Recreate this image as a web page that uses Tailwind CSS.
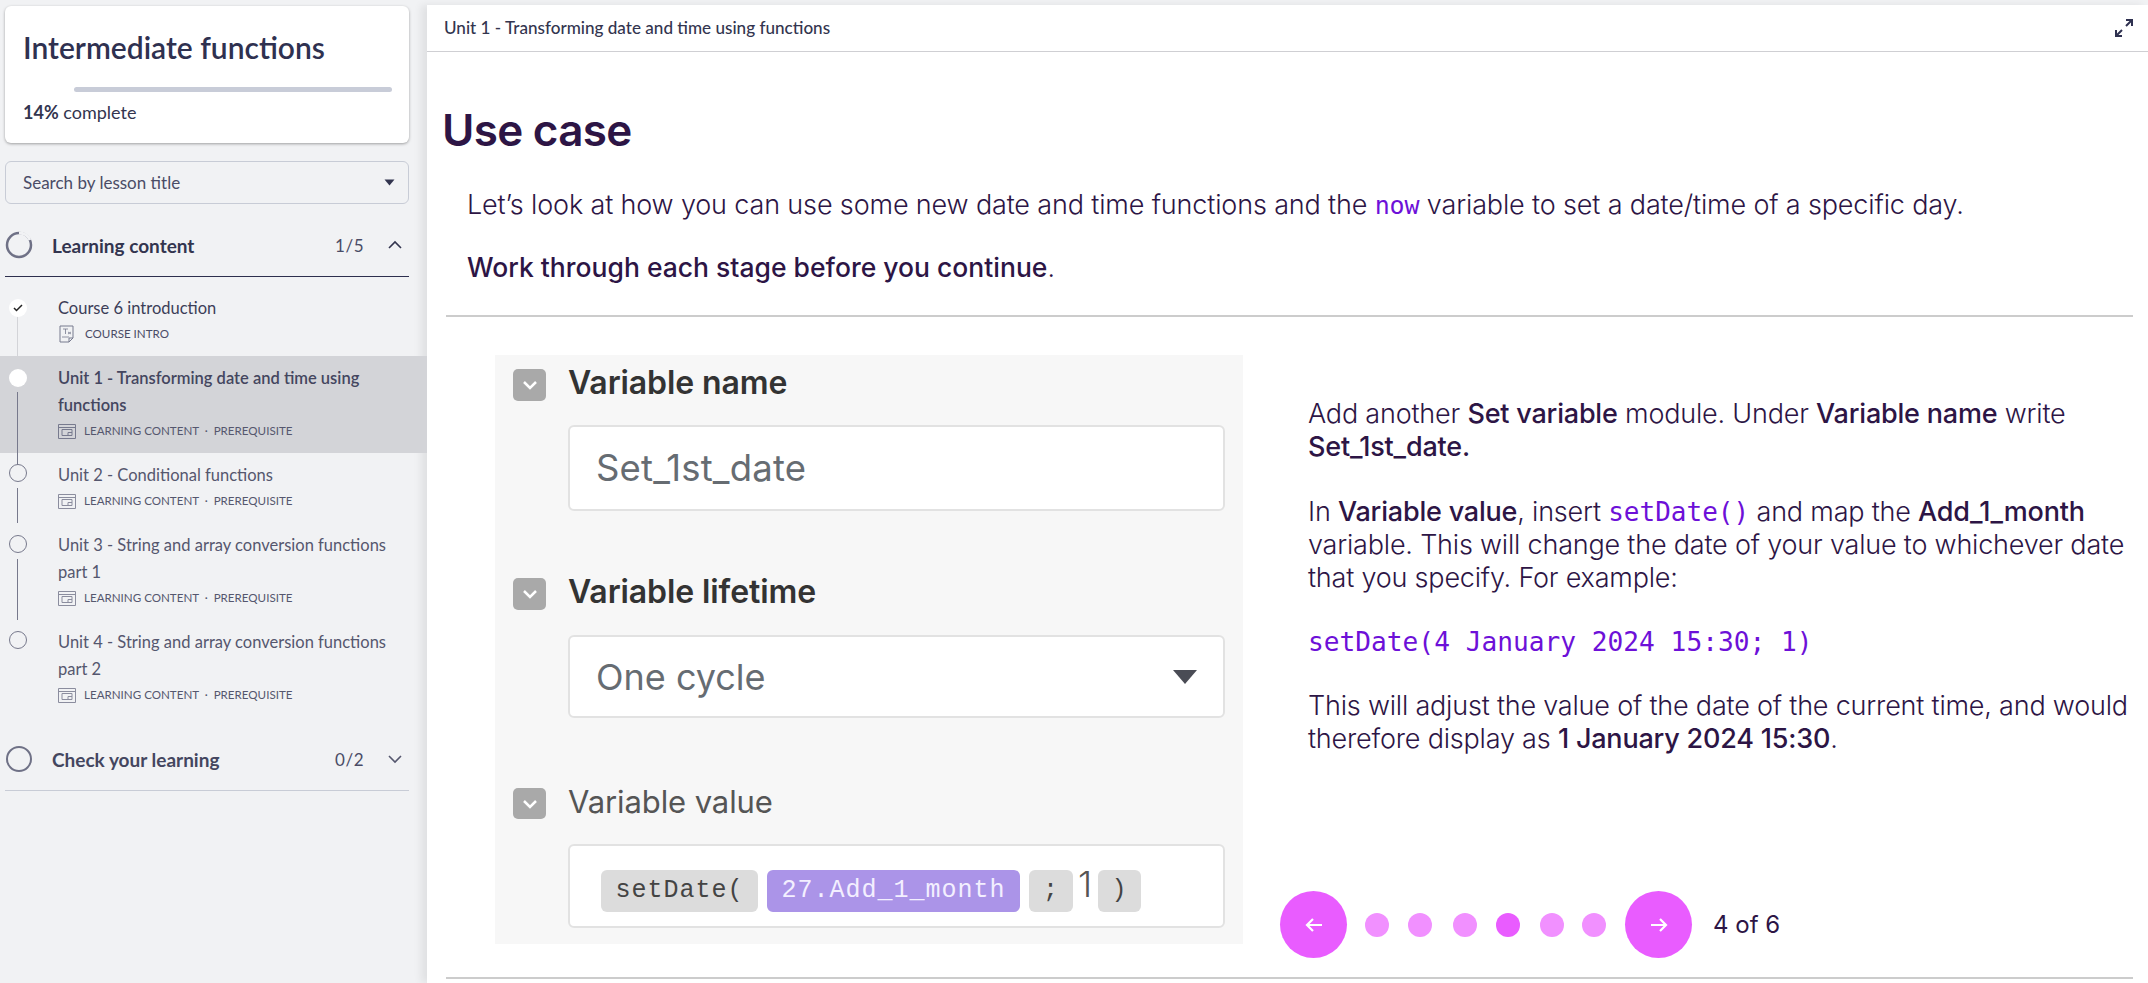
<!DOCTYPE html>
<html lang="en">
<head>
  <meta charset="UTF-8" />
  <title>Intermediate functions</title>
  <script src="https://cdn.jsdelivr.net/npm/@tailwindcss/browser@4"></script>
</head>
<body class="bg-[#f1f2f4] h-[983px] w-[2148px] overflow-hidden flex font-['Lato',sans-serif] text-[#33354f]">

  <!-- Sidebar -->
  <aside class="w-[427px] shrink-0 pt-[6px]">
    <div class="mx-[5px] w-[404px] h-[137px] bg-white rounded-md shadow-[0_1px_3px_rgba(0,0,0,0.35)] pl-[18px] pr-[17px] pt-[22px]">
      <h1 class="text-[30px] leading-[38px] font-semibold text-[#2f3150]">Intermediate functions</h1>
      <div class="mt-[21px] h-[5px] bg-[#c8ccd8] rounded-sm ml-[51px]"></div>
      <p class="mt-[8px] text-[18px] leading-[24px]"><b class="font-bold">14%</b> complete</p>
    </div>

    <div class="mx-[5px] mt-[18px] w-[404px] h-[43px] border border-[#c8ccd6] rounded-md flex items-center justify-between pl-[17px] pr-[13px] text-[17px] text-[#4a4c66]">
      <span>Search by lesson title</span>
      <svg width="11" height="7" viewBox="0 0 11 7"><path d="M0.5 0.5h10L5.5 6.5z" fill="#33354f"/></svg>
    </div>

    <!-- Learning content -->
    <div class="mx-[5px] mt-[10px] w-[404px] h-[63px] border-b border-[#2d2f4e] flex items-center">
      <svg width="28" height="28" viewBox="0 0 28 28" class="shrink-0"><circle cx="14" cy="14" r="12" fill="none" stroke="#6f7186" stroke-width="2.5"/><path d="M14 2a12 12 0 0 1 11 7" fill="none" stroke="#f1f2f4" stroke-width="3"/></svg>
      <span class="ml-[19px] pt-[2px] text-[19px] font-bold flex-1">Learning content</span>
      <span class="text-[17px] pt-[2px] text-[#4a4c66] tracking-[0.5px]">1/5</span>
      <svg width="16" height="10" viewBox="0 0 16 10" class="ml-[23px] mr-[6px]"><path d="M2 8l6-6 6 6" fill="none" stroke="#33354f" stroke-width="1.6"/></svg>
    </div>

    <ul class="mt-[9px] relative">
      <li class="h-[70px] flex relative">
        <div class="absolute left-[17px] top-[30px] w-px h-[40px] bg-[#d3d4d8]"></div>
        <div class="absolute left-[9px] top-[13px] w-[18px] h-[18px] rounded-full bg-white flex items-center justify-center">
          <svg width="10" height="8" viewBox="0 0 10 8"><path d="M1 4l2.5 2.5L9 1" fill="none" stroke="#222" stroke-width="1.5"/></svg>
        </div>
        <div class="pl-[58px] pt-[9px]">
          <p class="text-[16.5px] leading-[27px] text-[#3c3e58]">Course 6 introduction</p>
          <p class="mt-[-1px] flex items-center text-[11.6px] leading-[26px] text-[#4a4c66] uppercase">
            <svg width="16" height="18" viewBox="0 0 16 18" class="mr-[10px] ml-[1px]"><path d="M1 1h13v12l-4 4H1z M14 13h-4v4" fill="none" stroke="#777a8e"/><path d="M4 4h5M6.5 4v5M9 7l3 2M12 7l-3 2M3 12h7" fill="none" stroke="#777a8e" stroke-width=".8"/></svg>
            Course intro
          </p>
        </div>
      </li>

      <li class="h-[97px] flex relative bg-[#d3d4d8]">
        <div class="absolute left-[17px] top-[36px] w-px h-[61px] bg-[#77798c]"></div>
        <div class="absolute left-[9px] top-[13px] w-[18px] h-[18px] rounded-full bg-white"></div>
        <div class="pl-[58px] pt-[9px] pr-[30px]">
          <p class="text-[16.5px] leading-[27px] font-semibold text-[#44465f]">Unit 1 - Transforming date and time using functions</p>
          <p class="mt-[-1px] flex items-center text-[11.6px] leading-[26px] text-[#55576e] uppercase">
            <svg width="18" height="15" viewBox="0 0 18 15" class="mr-[8px]"><path d="M.5.5h17v14H.5z M.5 3.5h17 M4 5.5h10v6H4z M10 11.5V8.5h4" fill="none" stroke="#777a8e"/></svg>
            Learning content&nbsp;&nbsp;·&nbsp;&nbsp;Prerequisite
          </p>
        </div>
      </li>

      <li class="h-[70px] flex relative">
        <div class="absolute left-[17px] top-[0px] w-px h-[12px] bg-[#77798c]"></div>
        <div class="absolute left-[9px] top-[11px] w-[18px] h-[18px] rounded-full border border-[#77798c]"></div>
        <div class="absolute left-[17px] top-[35px] w-px h-[35px] bg-[#77798c]"></div>
        <div class="pl-[58px] pt-[9px]">
          <p class="text-[16.5px] leading-[27px] text-[#55576e]">Unit 2 - Conditional functions</p>
          <p class="mt-[-1px] flex items-center text-[11.6px] leading-[26px] text-[#55576e] uppercase">
            <svg width="18" height="15" viewBox="0 0 18 15" class="mr-[8px]"><path d="M.5.5h17v14H.5z M.5 3.5h17 M4 5.5h10v6H4z M10 11.5V8.5h4" fill="none" stroke="#8b8d9e"/></svg>
            Learning content&nbsp;&nbsp;·&nbsp;&nbsp;Prerequisite
          </p>
        </div>
      </li>

      <li class="h-[97px] flex relative">
        <div class="absolute left-[9px] top-[12px] w-[18px] h-[18px] rounded-full border border-[#77798c]"></div>
        <div class="absolute left-[17px] top-[36px] w-px h-[61px] bg-[#77798c]"></div>
        <div class="pl-[58px] pt-[9px] pr-[30px]">
          <p class="text-[16.5px] leading-[27px] text-[#55576e]">Unit 3 - String and array conversion functions part 1</p>
          <p class="mt-[-1px] flex items-center text-[11.6px] leading-[26px] text-[#55576e] uppercase">
            <svg width="18" height="15" viewBox="0 0 18 15" class="mr-[8px]"><path d="M.5.5h17v14H.5z M.5 3.5h17 M4 5.5h10v6H4z M10 11.5V8.5h4" fill="none" stroke="#8b8d9e"/></svg>
            Learning content&nbsp;&nbsp;·&nbsp;&nbsp;Prerequisite
          </p>
        </div>
      </li>

      <li class="h-[97px] flex relative">
        <div class="absolute left-[9px] top-[11px] w-[18px] h-[18px] rounded-full border border-[#77798c]"></div>
        <div class="pl-[58px] pt-[9px] pr-[30px]">
          <p class="text-[16.5px] leading-[27px] text-[#55576e]">Unit 4 - String and array conversion functions part 2</p>
          <p class="mt-[-1px] flex items-center text-[11.6px] leading-[26px] text-[#55576e] uppercase">
            <svg width="18" height="15" viewBox="0 0 18 15" class="mr-[8px]"><path d="M.5.5h17v14H.5z M.5 3.5h17 M4 5.5h10v6H4z M10 11.5V8.5h4" fill="none" stroke="#8b8d9e"/></svg>
            Learning content&nbsp;&nbsp;·&nbsp;&nbsp;Prerequisite
          </p>
        </div>
      </li>
    </ul>

    <!-- Check your learning -->
    <div class="mx-[5px] mt-[11px] w-[404px] h-[63px] border-b border-[#c8ccd6] flex items-center">
      <svg width="28" height="28" viewBox="0 0 28 28" class="shrink-0"><circle cx="14" cy="14" r="12" fill="none" stroke="#6f7186" stroke-width="2"/></svg>
      <span class="ml-[19px] pt-[2px] text-[19px] font-bold flex-1 text-[#44465f]">Check your learning</span>
      <span class="text-[17px] pt-[2px] text-[#4a4c66] tracking-[0.5px]">0/2</span>
      <svg width="16" height="10" viewBox="0 0 16 10" class="ml-[23px] mr-[6px]"><path d="M2 2l6 6 6-6" fill="none" stroke="#55576e" stroke-width="1.6"/></svg>
    </div>
  </aside>

  <!-- Main -->
  <main class="flex-1 mt-[5px] bg-white shadow-[-6px_0_8px_rgba(0,0,0,0.07)] flex flex-col">
    <header class="h-[47px] shrink-0 border-b border-[#cfcfd3] flex items-center justify-between pl-[17px] pr-[14px]">
      <span class="text-[17.1px] font-medium text-[#33354f]">Unit 1 - Transforming date and time using functions</span>
      <svg width="20" height="20" viewBox="0 0 20 20"><path d="M12 2h6v6M18 2l-6 6M8 18H2v-6M2 18l6-6" fill="none" stroke="#2f3150" stroke-width="2"/></svg>
    </header>

    <div class="pl-[15px] pr-[15px] font-['Inter',sans-serif] text-[#2d1545]">
      <h2 class="mt-[50px] text-[44px] leading-[56px] font-semibold tracking-[-0.7px]">Use case</h2>
      <p class="mt-[30px] ml-[25px] text-[27px] leading-[33px] font-light tracking-[-0.15px]">Let’s look at how you can use some new date and time functions and the <span class="text-[#6d10d8] font-['DejaVu_Sans_Mono',monospace] text-[25px] leading-none">now</span> variable to set a date/time of a specific day.</p>
      <p class="mt-[30px] ml-[25px] text-[26.5px] leading-[33px] font-light"><b class="font-medium">Work through each stage before you continue</b>.</p>
      <div class="mt-[31px] ml-[4px] h-[2px] bg-[#cccccc]"></div>

      <div class="mt-[38px] ml-[53px] flex h-[589px]">
        <!-- Screenshot of the Set variable module -->
        <div class="w-[748px] h-[589px] shrink-0 bg-[#f7f7f7] px-[18px] pt-[14px] text-[#333]">
          <div class="flex items-center gap-[22px] h-[32px]">
            <div class="w-[33px] h-[32px] rounded-[5px] bg-[#a9a9a9] flex items-center justify-center"><svg width="16" height="10" viewBox="0 0 16 10"><path d="M2 2l6 6 6-6" fill="none" stroke="#fff" stroke-width="2.5"/></svg></div>
            <span class="text-[32px] font-semibold tracking-[-0.1px] mt-[-5px]">Variable name</span>
          </div>
          <div class="mt-[24px] ml-[55px] h-[86px] bg-white border-2 border-[#e2e2e2] rounded-md flex items-center pl-[26px] text-[36.5px] tracking-[0.2px] text-[#666c72]">Set_1st_date</div>
          <div class="mt-[67px] flex items-center gap-[22px] h-[32px]">
            <div class="w-[33px] h-[32px] rounded-[5px] bg-[#a9a9a9] flex items-center justify-center"><svg width="16" height="10" viewBox="0 0 16 10"><path d="M2 2l6 6 6-6" fill="none" stroke="#fff" stroke-width="2.5"/></svg></div>
            <span class="text-[32px] font-semibold tracking-[-0.1px] mt-[-5px]">Variable lifetime</span>
          </div>
          <div class="mt-[25px] ml-[55px] h-[83px] bg-white border-2 border-[#e2e2e2] rounded-md flex items-center justify-between pl-[26px] pr-[26px] text-[36px] text-[#666c72]">
            <span>One cycle</span>
            <svg width="24" height="15" viewBox="0 0 24 15"><path d="M0 1h24L12 15z" fill="#4a4c55"/></svg>
          </div>
          <div class="mt-[70px] flex items-center gap-[22px] h-[31px]">
            <div class="w-[33px] h-[31px] rounded-[5px] bg-[#a9a9a9] flex items-center justify-center"><svg width="16" height="10" viewBox="0 0 16 10"><path d="M2 2l6 6 6-6" fill="none" stroke="#fff" stroke-width="2.5"/></svg></div>
            <span class="text-[31px] text-[#555] tracking-[-0.1px] mt-[-2px]">Variable value</span>
          </div>
          <div class="mt-[25px] ml-[55px] h-[84px] bg-white border-2 border-[#e2e2e2] rounded-md flex items-center pl-[31px] pt-[10px] text-[25px] font-['Liberation_Mono',monospace] tracking-[1px]">
            <span class="h-[42px] w-[157px] bg-[#dcdcdc] rounded-md flex items-center justify-center text-[#444]">setDate(</span>
            <span class="ml-[9px] h-[42px] w-[253px] bg-[#ab94e8] rounded-md flex items-center justify-center text-[#f3efff]">27.Add_1_month</span>
            <span class="ml-[9px] h-[42px] w-[44px] bg-[#dcdcdc] rounded-md flex items-center justify-center text-[#444]">;</span>
            <span class="ml-[5px] w-[13px] text-[36px] font-['Inter',sans-serif] font-light text-[#555] leading-none mt-[-14px] tracking-normal">1</span>
            <span class="ml-[7px] h-[42px] w-[43px] bg-[#dcdcdc] rounded-md flex items-center justify-center text-[#444]">)</span>
          </div>
        </div>

        <!-- Instructions -->
        <div class="ml-[65px] flex-1 flex flex-col text-[27px] leading-[33px] font-light tracking-[-0.2px]">
          <p class="mt-[42px]">Add another <b class="font-medium">Set variable</b> module. Under <b class="font-medium">Variable name</b> write <b class="font-medium">Set_1st_date.</b></p>
          <p class="mt-[32px]">In <b class="font-medium">Variable value</b>, insert <span class="text-[#6d10d8] font-['DejaVu_Sans_Mono',monospace] text-[26px] leading-none tracking-normal">setDate()</span> and map the <b class="font-medium">Add_1_month</b> variable. This will change the date of your value to whichever date that you specify. For example:</p>
          <p class="mt-[32px] text-[#6d10d8] font-['DejaVu_Sans_Mono',monospace] text-[26.2px] tracking-normal font-normal">setDate(4 January 2024 15:30; 1)</p>
          <p class="mt-[30px]">This will adjust the value of the date of the current time, and would therefore display as <b class="font-medium">1 January 2024 15:30</b>.</p>

          <div class="mt-auto mb-[-14px] ml-[-28px] flex items-center">
            <button class="w-[67px] h-[67px] rounded-full bg-[#e95cff] flex items-center justify-center"><svg width="20" height="18" viewBox="0 0 20 18"><path d="M18 9H3M9 3L3 9l6 6" fill="none" stroke="#fff" stroke-width="2.2"/></svg></button>
            <span class="ml-[18px] w-[24px] h-[24px] rounded-full bg-[#f190ff]"></span>
            <span class="ml-[19px] w-[24px] h-[24px] rounded-full bg-[#f190ff]"></span>
            <span class="ml-[21px] w-[24px] h-[24px] rounded-full bg-[#f190ff]"></span>
            <span class="ml-[19px] w-[24px] h-[24px] rounded-full bg-[#e95cff]"></span>
            <span class="ml-[20px] w-[24px] h-[24px] rounded-full bg-[#f190ff]"></span>
            <span class="ml-[18px] w-[24px] h-[24px] rounded-full bg-[#f190ff]"></span>
            <button class="ml-[19px] w-[67px] h-[67px] rounded-full bg-[#e95cff] flex items-center justify-center"><svg width="20" height="18" viewBox="0 0 20 18"><path d="M2 9h15M11 3l6 6-6 6" fill="none" stroke="#fff" stroke-width="2.2"/></svg></button>
            <span class="ml-[21px] text-[24px] font-normal tracking-normal">4 of 6</span>
          </div>
        </div>
      </div>

      <div class="mt-[33px] ml-[4px] h-[2px] bg-[#cccccc]"></div>
    </div>
  </main>
</body>
</html>
